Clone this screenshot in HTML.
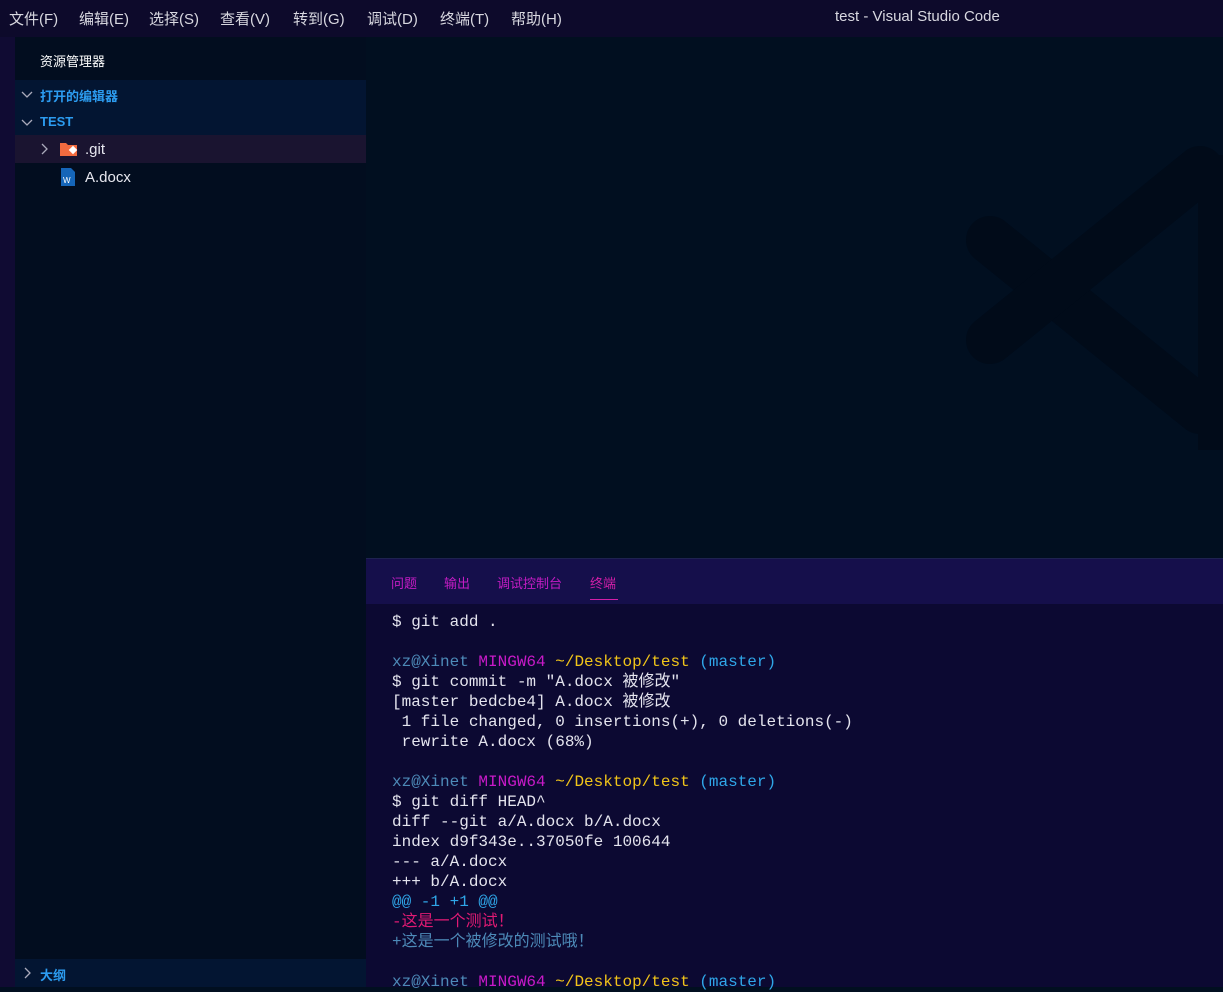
<!DOCTYPE html>
<html><head><meta charset="utf-8"><style>
*{margin:0;padding:0;box-sizing:border-box}
body{width:1223px;height:987px;overflow:hidden;background:#010f20;font-family:"Liberation Sans","Noto Sans CJK SC",sans-serif;position:relative}
.menu{position:absolute;left:0;top:0;width:1223px;height:37px;background:#0d0a2b;color:#d8d8e0;font-size:15px}
.menu span{position:absolute;top:8px}
.act{position:absolute;left:0;top:37px;width:15px;height:950px;background:#100b33}
.side{position:absolute;left:15px;top:37px;width:351px;height:950px;background:#020d1f}
.t{position:absolute;font-size:13px;font-weight:bold}
.row{position:absolute;left:0;width:351px}
.term{position:absolute;left:366px;top:558px;width:857px;height:429px;background:#0c0932;border-top:1px solid #1e2250}
.tabs{position:absolute;left:0;top:0;width:857px;height:45px;background:#150f4b}
.tabs span{position:absolute;top:14px;font-size:13px;color:#c41cc4}
pre{position:absolute;left:26px;top:53px;font-family:"Liberation Mono","Noto Sans CJK SC",monospace;font-size:16px;line-height:20px;color:#e4e4ee}
.b{color:#4d8ab8}.m{color:#c81ac8}.y{color:#f0c419}.c{color:#2fa6e8}.r{color:#e01a73}.g{color:#4d8ab8}
svg.ch{position:absolute}
</style></head><body>
<div class="menu">
<span style="left:9px">文件(F)</span><span style="left:79px">编辑(E)</span><span style="left:149px">选择(S)</span><span style="left:220px">查看(V)</span><span style="left:293px">转到(G)</span><span style="left:367px">调试(D)</span><span style="left:440px">终端(T)</span><span style="left:511px">帮助(H)</span>
<span style="left:835px">test - Visual Studio Code</span>
</div>
<div class="act"></div>
<div class="side">
<div class="t" style="left:25px;top:14px;color:#fff;font-weight:normal">资源管理器</div>
<div class="row" style="top:43px;height:55px;background:#031532"></div>
<svg class="ch" style="left:6px;top:51px" width="12" height="12"><path d="M1 4l5 5 5-5" stroke="#aab" stroke-width="1.3" fill="none"/></svg>
<div class="t" style="left:25px;top:49px;color:#2c9cf0">打开的编辑器</div>
<svg class="ch" style="left:6px;top:79px" width="12" height="12"><path d="M1 4l5 5 5-5" stroke="#aab" stroke-width="1.3" fill="none"/></svg>
<div class="t" style="left:25px;top:77px;color:#2c9cf0">TEST</div>
<div class="row" style="top:98px;height:28px;background:#1a1430"></div>
<svg class="ch" style="left:23px;top:106px" width="12" height="12"><path d="M4 1l5 5-5 5" stroke="#aab" stroke-width="1.3" fill="none"/></svg>
<svg style="position:absolute;left:44px;top:104px" width="20" height="16"><path d="M1 2h6l2 2h9v11H1z" fill="#f26b3f"/><rect x="11" y="6" width="6" height="6" transform="rotate(45 14 9)" fill="#fff"/></svg>
<div style="position:absolute;left:70px;top:104px;color:#e8e8f0;font-size:15px">.git</div>
<svg style="position:absolute;left:46px;top:131px" width="14" height="18"><path d="M0 0h10l4 4v14H0z" fill="#1565b8"/><text x="2" y="15" font-size="8" fill="#fff" font-family="Liberation Sans">W</text></svg>
<div style="position:absolute;left:70px;top:132px;color:#e8e8f0;font-size:15px">A.docx</div>
<div class="row" style="top:922px;height:28px;background:#031532"></div>
<svg class="ch" style="left:6px;top:930px" width="12" height="12"><path d="M4 1l5 5-5 5" stroke="#aab" stroke-width="1.3" fill="none"/></svg>
<div class="t" style="left:25px;top:928px;color:#2c9cf0">大纲</div>
</div>
<svg style="position:absolute;left:960px;top:140px" width="263" height="320">
<g stroke="#010b19" stroke-width="48" stroke-linecap="round" fill="none">
<line x1="30" y1="100" x2="240" y2="270"/>
<line x1="30" y1="200" x2="240" y2="30"/>
</g>
<rect x="238" y="15" width="30" height="295" fill="#010b19"/>
</svg>
<div class="term">
<div class="tabs"><span style="left:25px">问题</span><span style="left:78px">输出</span><span style="left:131px">调试控制台</span><span style="left:224px;color:#d21fa8">终端</span><div style="position:absolute;left:224px;top:40px;width:28px;height:1px;background:#d21fa8"></div></div>
<pre>$ git add .

<span class="b">xz@Xinet</span> <span class="m">MINGW64</span> <span class="y">~/Desktop/test</span> <span class="c">(master)</span>
$ git commit -m "A.docx 被修改"
[master bedcbe4] A.docx 被修改
 1 file changed, 0 insertions(+), 0 deletions(-)
 rewrite A.docx (68%)

<span class="b">xz@Xinet</span> <span class="m">MINGW64</span> <span class="y">~/Desktop/test</span> <span class="c">(master)</span>
$ git diff HEAD^
diff --git a/A.docx b/A.docx
index d9f343e..37050fe 100644
--- a/A.docx
+++ b/A.docx
<span class="c">@@ -1 +1 @@</span>
<span class="r">-这是一个测试！</span>
<span class="g">+这是一个被修改的测试哦！</span>

<span class="b">xz@Xinet</span> <span class="m">MINGW64</span> <span class="y">~/Desktop/test</span> <span class="c">(master)</span></pre>
</div>
</body></html>
